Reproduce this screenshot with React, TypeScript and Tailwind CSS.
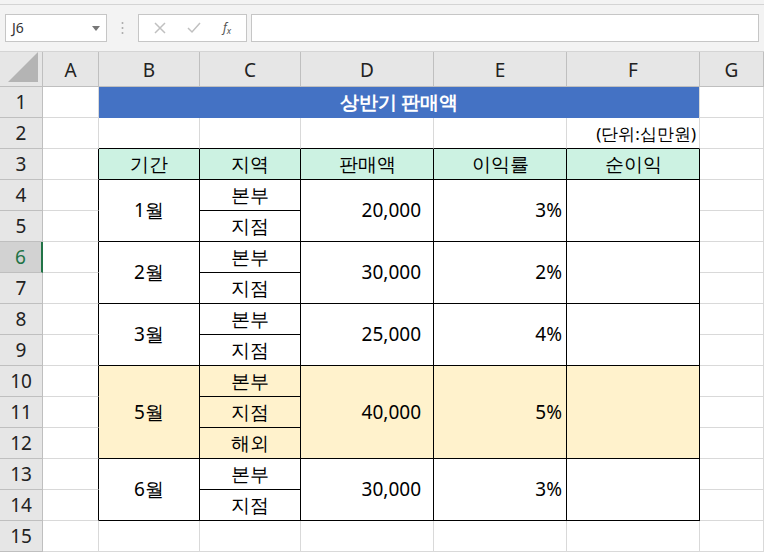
import React from "react";

const RS: Record<number, string> = {1:"row-start-1",2:"row-start-2",3:"row-start-3",4:"row-start-4",5:"row-start-5",6:"row-start-6",7:"row-start-7",8:"row-start-8",9:"row-start-9",10:"row-start-10",11:"row-start-11",12:"row-start-12",13:"row-start-13",14:"row-start-14",15:"row-start-15",16:"row-start-16"};
const CS: Record<number, string> = {1:"col-start-1",2:"col-start-2",3:"col-start-3",4:"col-start-4",5:"col-start-5",6:"col-start-6",7:"col-start-7",8:"col-start-8"};
const RSPAN: Record<number, string> = {1:"",2:"row-span-2",3:"row-span-3"};
const CSPAN: Record<number, string> = {1:"",5:"col-span-5"};

function Cell({ r, c, rs = 1, cs = 1, cls = "", children }: { r: number; c: number; rs?: number; cs?: number; cls?: string; children?: React.ReactNode }) {
  return <div className={`${RS[r]} ${CS[c]} ${RSPAN[rs]} ${CSPAN[cs]} flex items-center ${cls}`}>{children}</div>;
}

const groups = [
  { m: "1월", start: 4, regions: ["본부", "지점"], sales: "20,000", rate: "3%", y: false },
  { m: "2월", start: 6, regions: ["본부", "지점"], sales: "30,000", rate: "2%", y: false },
  { m: "3월", start: 8, regions: ["본부", "지점"], sales: "25,000", rate: "4%", y: false },
  { m: "5월", start: 10, regions: ["본부", "지점", "해외"], sales: "40,000", rate: "5%", y: true },
  { m: "6월", start: 13, regions: ["본부", "지점"], sales: "30,000", rate: "3%", y: false },
];

export default function App() {
  const light = "border-r border-b border-[#d9d9d9]";
  const blk = "border-r border-b border-black";
  const cells: React.ReactNode[] = [];
  // column headers
  const letters = ["A", "B", "C", "D", "E", "F", "G"];
  cells.push(
    <Cell key="corner" r={1} c={1} cls="bg-[#e6e6e6] border-r border-b border-[#bfbfbf] justify-end items-end">
      <svg width="30" height="30" className="mb-[4px] mr-[4px]"><polygon points="30,0 30,30 0,30" fill="#b4b4b4" /></svg>
    </Cell>
  );
  letters.forEach((l, i) =>
    cells.push(
      <Cell key={"h" + l} r={1} c={i + 2} cls="bg-[#e6e6e6] border-r border-b border-[#bfbfbf] justify-center text-[19px] text-[#222] pt-[2px]">{l}</Cell>
    )
  );
  // row headers
  for (let n = 1; n <= 15; n++) {
    const sel = n === 6;
    cells.push(
      <Cell key={"r" + n} r={n + 1} c={1} cls={`${sel ? "bg-[#d2d2d2] text-[#217346] border-r-2 border-r-[#217346]" : "bg-[#e6e6e6] text-[#222] border-r border-r-[#bfbfbf]"} border-b border-b-[#bfbfbf] justify-center text-[19px]`}>{n}</Cell>
    );
    // A column
    cells.push(<Cell key={"a" + n} r={n + 1} c={2} cls={n >= 3 && n <= 14 ? "border-r border-r-black border-b border-b-[#d9d9d9]" : light} />);
    // G column
    cells.push(<Cell key={"g" + n} r={n + 1} c={8} cls={light} />);
  }
  // row 1 title
  cells.push(
    <Cell key="title" r={2} c={3} cs={5} cls="bg-[#4472c4] justify-center text-white font-bold text-[19px] border-r border-r-[#d9d9d9]">상반기 판매액</Cell>
  );
  // row 2
  for (let c = 3; c <= 6; c++) cells.push(<Cell key={"r2" + c} r={3} c={c} cls="border-r border-r-[#d9d9d9] border-b border-b-black" />);
  cells.push(
    <Cell key="unit" r={3} c={7} cls="border-r border-r-[#d9d9d9] border-b border-b-black justify-end pr-[3px] text-[17px]">(단위:십만원)</Cell>
  );
  // row 3 headers
  ["기간", "지역", "판매액", "이익률", "순이익"].forEach((h, i) =>
    cells.push(<Cell key={"th" + h} r={4} c={i + 3} cls={`${blk} bg-[#ccf2e2] justify-center text-[19px]`}>{h}</Cell>)
  );
  groups.forEach((g) => {
    const span = g.regions.length;
    const bg = g.y ? "bg-[#fff2cc]" : "bg-white";
    const r = g.start + 1;
    cells.push(<Cell key={g.m + "m"} r={r} c={3} rs={span} cls={`${blk} ${bg} justify-center text-[19px]`}>{g.m}</Cell>);
    g.regions.forEach((rg, i) =>
      cells.push(<Cell key={g.m + rg} r={r + i} c={4} cls={`${blk} ${bg} justify-center text-[19px]`}>{rg}</Cell>)
    );
    cells.push(<Cell key={g.m + "s"} r={r} c={5} rs={span} cls={`${blk} ${bg} justify-end pr-[12px] text-[19px]`}>{g.sales}</Cell>);
    cells.push(<Cell key={g.m + "p"} r={r} c={6} rs={span} cls={`${blk} ${bg} justify-end pr-[4px] text-[19px]`}>{g.rate}</Cell>);
    cells.push(<Cell key={g.m + "n"} r={r} c={7} rs={span} cls={`${blk} ${bg}`} />);
  });
  for (let c = 3; c <= 7; c++) cells.push(<Cell key={"r15" + c} r={16} c={c} cls={light} />);

  return (
    <div className="w-[764px] h-[560px] overflow-hidden bg-white font-['Noto_Sans_CJK_KR','Noto_Sans',sans-serif] text-black leading-none">
      <div className="h-[5px] bg-[#f3f3f3] border-b border-[#d4d4d4]" />
      <div className="h-[47px] bg-[#f3f3f3] flex items-center px-[5px] gap-[0px] border-b border-[#d4d4d4]">
        <div className="w-[102px] h-[28px] bg-white border border-[#c6c6c6] flex items-center justify-between pl-[6px] pr-[6px] text-[14px] text-[#333]">
          <span>J6</span>
          <svg width="8" height="5"><polygon points="0,0 8,0 4,5" fill="#777" /></svg>
        </div>
        <div className="w-[31px] flex justify-center">
          <svg width="3" height="14"><circle cx="1.5" cy="2" r="1" fill="#aaa" /><circle cx="1.5" cy="7" r="1" fill="#aaa" /><circle cx="1.5" cy="12" r="1" fill="#aaa" /></svg>
        </div>
        <div className="w-[109px] h-[28px] bg-white border border-[#c6c6c6] flex items-center justify-around px-[4px]">
          <svg width="12" height="12"><path d="M1 1L11 11M11 1L1 11" stroke="#c0c0c0" strokeWidth="1.5" /></svg>
          <svg width="14" height="12"><path d="M1 6L5 10L13 1" stroke="#c0c0c0" strokeWidth="1.5" fill="none" /></svg>
          <span className="italic font-['DejaVu_Serif',serif] text-[12px] text-[#555]">f<sub className="text-[9px]">x</sub></span>
        </div>
        <div className="ml-[4px] flex-1 h-[28px] bg-white border border-[#c6c6c6]" />
      </div>
      <div className="grid grid-cols-[43px_56px_101px_101px_133px_133px_133px_1fr] grid-rows-[35px_repeat(15,31px)]">
        {cells}
      </div>
    </div>
  );
}
